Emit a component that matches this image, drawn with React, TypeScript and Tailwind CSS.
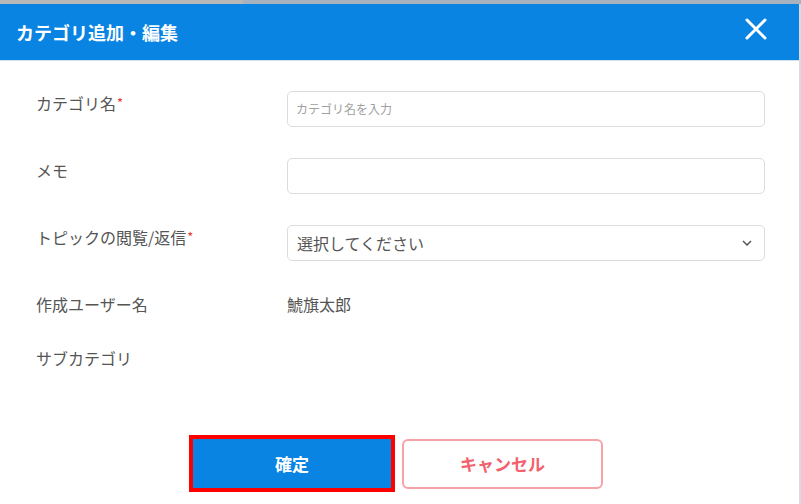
const font = { fontFamily: '"Noto Sans CJK JP", "Noto Sans", sans-serif' };

const Req = () => <span className="text-[#e53935] text-[13px] align-top ml-[1px]">*</span>;

const App = () => {
  return (
    <div className="w-[801px] h-[504px] bg-white overflow-hidden flex flex-col" style={font}>
      {/* background strip behind the modal */}
      <div className="flex h-[4px] shrink-0">
        <div className="w-[243px] bg-[#b8b8b8]" />
        <div className="flex-1 bg-[#a7b2bf]" />
      </div>

      <div className="flex flex-1">
        <div className="w-[799px] flex flex-col">
          {/* header */}
          <div className="h-[57px] shrink-0 bg-[#0a84e2] border-b border-[#cfe3f5] flex items-center justify-between pl-4 pr-[32px]">
            <h1 className="text-white text-[18px] font-bold leading-none">カテゴリ追加・編集</h1>
            <svg width="22" height="22" viewBox="0 0 22 22" className="mb-[6px]">
              <path d="M2 2 L20 20 M20 2 L2 20" stroke="white" strokeWidth="3" strokeLinecap="round" />
            </svg>
          </div>

          {/* form */}
          <div className="flex flex-col pl-[36px] pt-[30px] text-[#555] text-[16px]">
            <div className="flex items-start h-[67px]">
              <div className="w-[251px] leading-6">
                カテゴリ名<Req />
              </div>
              <div className="w-[478px] h-[36px] border border-[#dcdcdc] rounded-[5px] flex items-center px-[8px] text-[12px] text-[#a0a0a0]">
                カテゴリ名を入力
              </div>
            </div>
            <div className="flex items-start h-[67px]">
              <div className="w-[251px] leading-6">メモ</div>
              <div className="w-[478px] h-[36px] border border-[#dcdcdc] rounded-[5px]" />
            </div>
            <div className="flex items-start h-[67px]">
              <div className="w-[251px] leading-6">
                トピックの閲覧/返信<Req />
              </div>
              <div className="w-[478px] h-[36px] border border-[#dcdcdc] rounded-[5px] flex items-center justify-between pl-[9px] pr-[12px]">
                <span className="text-[16px] text-[#555]">選択してください</span>
                <svg width="10" height="6" viewBox="0 0 10 6">
                  <path d="M1 1 L5 5 L9 1" stroke="#555" strokeWidth="1.5" fill="none" />
                </svg>
              </div>
            </div>
            <div className="flex items-start h-[54px]">
              <div className="w-[251px] leading-6">作成ユーザー名</div>
              <div className="leading-6">鯱旗太郎</div>
            </div>
            <div className="flex items-start">
              <div className="w-[251px] leading-6">サブカテゴリ</div>
            </div>
          </div>

          {/* buttons */}
          <div className="flex gap-[11px] pl-[193px] mt-[69px]">
            <button className="w-[198px] h-[49px] bg-[#0a84e2] text-white text-[17px] font-bold outline-4 outline-[#ff0000]">
              確定
            </button>
            <button className="w-[201px] h-[50px] border-2 border-[#f7a1a8] rounded-[6px] bg-white text-[#f2616c] text-[17px] font-bold">
              キャンセル
            </button>
          </div>
        </div>
        <div className="w-[2px] bg-[#d3dbe4]" />
      </div>
    </div>
  );
};

export default App;
